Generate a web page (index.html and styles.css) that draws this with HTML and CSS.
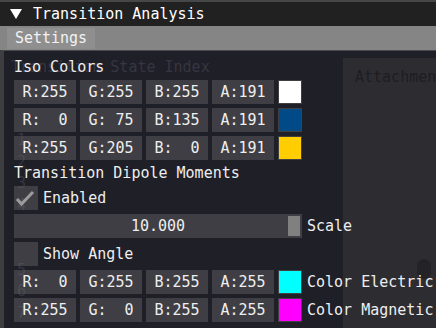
FILE: index.html
```html
<!DOCTYPE html>
<html>
<head>
    <title>Transition Analysis</title>
    <link rel="stylesheet" href="styles.css">
</head>
<body>
<div class="desktop">
    <!-- window behind, seen through the front one -->
    <div class="back-window">
        <div class="back-main">
            <div class="back-title">Transition State Index</div>
            <div class="back-list">
                <div>1</div><div>2</div><div>3</div><div>4</div>
                <div>5</div><div>6</div><div>7</div><div>8</div>
            </div>
            <div class="back-label">Iso Value (&Psi;&sup2;)</div>
            <div class="back-value">0.050000</div>
            <div class="back-edit">Edit mode  &#10003; Hide overlapping text</div>
        </div>
        <div class="back-scroll"></div>
        <div class="back-panel">
            <div class="back-panel-text">Attachments</div>
            <div class="back-panel-grab"></div>
        </div>
    </div>

    <div class="window">
        <div class="titlebar">
            <svg class="collapse" width="12" height="11" viewBox="0 0 12 11"><polygon points="0,0 12,0 6,10" fill="#ffffff"/></svg>
            <span>Transition Analysis</span>
        </div>
        <div class="menubar">
            <div class="menu-item">Settings</div>
        </div>
        <div class="content">
            <div class="text-line">Iso Colors</div>
            <div class="row">
                <div class="btn">R:255</div><div class="btn">G:255</div><div class="btn">B:255</div><div class="btn">A:191</div>
                <div class="swatch sw-white"></div>
            </div>
            <div class="row">
                <div class="btn">R:  0</div><div class="btn">G: 75</div><div class="btn">B:135</div><div class="btn">A:191</div>
                <div class="swatch sw-blue"></div>
            </div>
            <div class="row">
                <div class="btn">R:255</div><div class="btn">G:205</div><div class="btn">B:  0</div><div class="btn">A:191</div>
                <div class="swatch sw-yellow"></div>
            </div>
            <div class="text-line">Transition Dipole Moments</div>
            <div class="row">
                <div class="checkbox">
                    <svg width="24" height="24" viewBox="0 0 24 24"><polyline points="3,13 7.5,18 19,6" fill="none" stroke="#9c9c9c" stroke-width="3"/></svg>
                </div>
                <span class="label">Enabled</span>
            </div>
            <div class="row">
                <div class="slider">
                    <span>10.000</span>
                    <div class="grab"></div>
                </div>
                <span class="label">Scale</span>
            </div>
            <div class="row">
                <div class="checkbox"></div>
                <span class="label">Show Angle</span>
            </div>
            <div class="row">
                <div class="btn">R:  0</div><div class="btn">G:255</div><div class="btn">B:255</div><div class="btn">A:255</div>
                <div class="swatch sw-cyan"></div>
                <span class="label">Color Electric</span>
            </div>
            <div class="row">
                <div class="btn">R:255</div><div class="btn">G:  0</div><div class="btn">B:255</div><div class="btn">A:255</div>
                <div class="swatch sw-magenta"></div>
                <span class="label">Color Magnetic</span>
            </div>
        </div>
    </div>
</div>
</body>
</html>
```

FILE: styles.css
```css
body {
    margin: 0;
    background-color: #1f1f28;
    font-family: "DejaVu Sans Mono", monospace;
    font-size: 15px;
    line-height: 18px;
    color: #eeeeee;
    overflow: hidden;
}
.desktop {
    position: relative;
    width: 436px;
    height: 328px;
    overflow: hidden;
}

/* back window */
.back-window {
    position: absolute;
    left: 0;
    top: 58px;
    width: 460px;
    height: 300px;
    display: flex;
    align-items: flex-start;
    color: #363640;
}
.back-main {
    width: 288px;
    padding-left: 11px;
}
.back-main > div {
    white-space: pre;
}
.back-title {
    height: 29px;
}
.back-list {
    padding-left: 6px;
    line-height: 21.6px;
}
.back-label {
    margin-top: 2px;
    padding-left: 1px;
}
.back-value {
    padding-left: 116px;
    margin-top: 1px;
}
.back-edit {
    margin-top: 7px;
    padding-left: 29px;
}
.back-scroll {
    width: 10px;
    height: 117px;
    margin-top: 30px;
    border-radius: 5px;
    background-color: #24242d;
}
.back-panel {
    margin-left: 44px;
    width: 100px;
    height: 280px;
    background-color: #2d2d31;
    color: #1d1d21;
    padding: 10px 12px;
}
.back-panel-text {
    white-space: nowrap;
}
.back-panel-grab {
    margin: 173px 0 0 62px;
    width: 14px;
    height: 20px;
    border-radius: 7px;
    background-color: #232327;
}

/* front window */
.window {
    position: absolute;
    left: 0;
    top: 0;
    width: 460px;
    height: 340px;
    display: flex;
    flex-direction: column;
}
.titlebar {
    height: 24px;
    border-top: 2px solid #474747;
    background-color: #212121;
    display: flex;
    align-items: center;
    padding-left: 10px;
    color: #ffffff;
}
.collapse {
    margin-right: 11px;
}
.menubar {
    height: 24px;
    background-color: #858585;
    display: flex;
    align-items: center;
    padding-left: 7px;
}
.menu-item {
    background-color: #8f8f8f;
    height: 21px;
    width: 88px;
    display: flex;
    align-items: center;
    justify-content: center;
    color: #f2f2f2;
}
.content {
    flex: 1;
    border-top: 1px solid #4a4a4e;
    border-left: 4px solid #3e3e40;
    padding: 7px 0 0 10px;
    display: flex;
    flex-direction: column;
    gap: 4px;
}
.text-line {
    height: 18px;
    white-space: pre;
}
.row {
    display: flex;
    gap: 4px;
    height: 24px;
    align-items: center;
}
.btn {
    width: 62px;
    height: 24px;
    background-color: rgba(110, 110, 110, 0.4);
    display: flex;
    align-items: center;
    justify-content: center;
    white-space: pre;
}
.swatch {
    width: 22px;
    height: 22px;
    border: 1px solid #404040;
}
.sw-white { background-color: #ffffff; }
.sw-blue { background-color: #004b87; }
.sw-yellow { background-color: #ffcd00; }
.sw-cyan { background-color: #00ffff; }
.sw-magenta { background-color: #ff00ff; }
.label {
    white-space: pre;
    padding-left: 1px;
}
.checkbox {
    width: 24px;
    height: 24px;
    background-color: rgba(110, 110, 110, 0.4);
}
.checkbox svg {
    display: block;
}
.slider {
    position: relative;
    width: 288px;
    height: 24px;
    background-color: rgba(110, 110, 110, 0.4);
    display: flex;
    align-items: center;
    justify-content: center;
}
.grab {
    position: absolute;
    right: 2px;
    top: 2px;
    width: 12px;
    height: 20px;
    background-color: #808080;
}
```
